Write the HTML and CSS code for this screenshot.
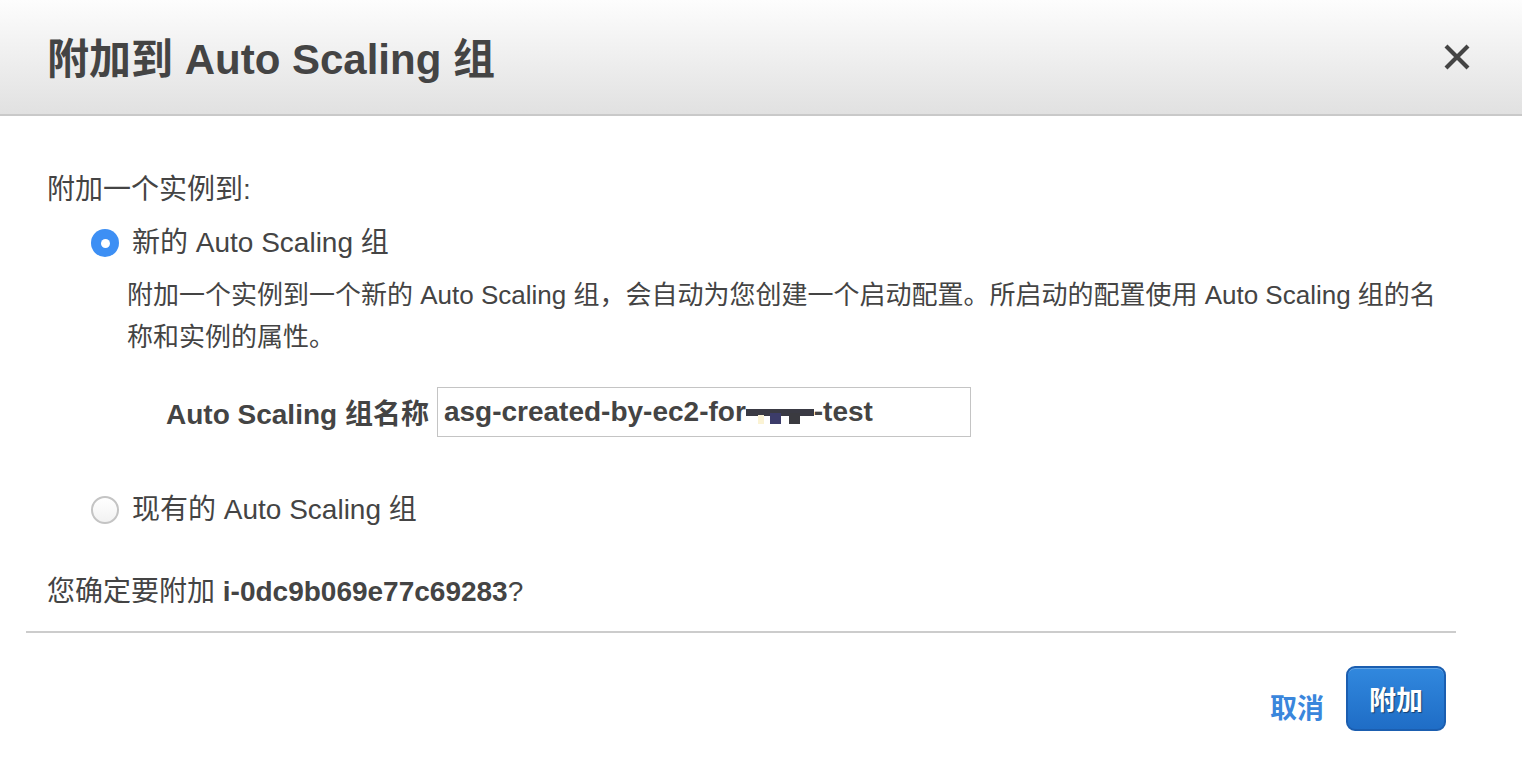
FILE: index.html
```html
<!DOCTYPE html>
<html lang="zh-CN">
<head>
<meta charset="utf-8">
<title>附加到 Auto Scaling 组</title>
<link rel="stylesheet" href="styles.css">
</head>
<body>
<div class="dialog">
  <header class="hd">
    <h1 class="title">附加到 Auto Scaling 组</h1>
    <button class="close" type="button" aria-label="关闭">
      <svg width="28" height="28" viewBox="0 0 28 28"><path d="M3 3 L25 25 M25 3 L3 25" stroke="#444" stroke-width="4.2" stroke-linecap="butt" fill="none"/></svg>
    </button>
  </header>
  <main class="bd">
    <p class="lead">附加一个实例到:</p>
    <div class="options">
      <div class="radio-row">
        <span class="radio checked"></span>
        <span class="radio-label">新的 Auto Scaling 组</span>
      </div>
      <p class="desc">附加一个实例到一个新的 Auto Scaling 组，会自动为您创建一个启动配置。所启动的配置使用 Auto Scaling 组的名称和实例的属性。</p>
      <div class="field">
        <span class="field-label">Auto Scaling 组名称</span>
        <div class="input"><span>asg-created-by-ec2-for</span><span class="redact"><i class="bar"></i><i class="leg l1"></i><i class="leg l2"></i><i class="spot"></i></span><span>-test</span></div>
      </div>
      <div class="radio-row second">
        <span class="radio"></span>
        <span class="radio-label">现有的 Auto Scaling 组</span>
      </div>
    </div>
    <p class="confirm">您确定要附加 <b>i-0dc9b069e77c69283</b>?</p>
  </main>
  <div class="sep"></div>
  <footer class="actions">
    <a class="cancel" href="#">取消</a>
    <button class="primary" type="button">附加</button>
  </footer>
</div>
</body>
</html>
```
FILE: styles.css
```css
* { box-sizing: border-box; }
html, body { margin: 0; padding: 0; background: #fff; }
body {
  font-family: "Liberation Sans", "Noto Sans CJK SC", sans-serif;
  color: #444;
  width: 1522px;
  height: 770px;
  overflow: hidden;
}
.dialog { display: flex; flex-direction: column; }
.hd {
  height: 116px;
  border-bottom: 2px solid #c9c9c9;
  background: linear-gradient(to bottom, #fdfdfd 0%, #e1e1e1 100%);
  display: flex;
  align-items: center;
  justify-content: space-between;
  padding: 0 51px 0 47px;
}
.title {
  margin: 0;
  font-size: 42px;
  font-weight: bold;
  color: #444;
  line-height: 50px;
  position: relative;
  top: 3px;
}
.close {
  border: 0;
  background: transparent;
  padding: 0;
  width: 28px;
  height: 28px;
  display: flex;
  cursor: pointer;
}
.bd { padding: 54px 0 0 47px; }
.lead { margin: 0; font-size: 28px; line-height: 40px; }
.options { padding-left: 44px; }
.radio-row {
  display: flex;
  align-items: center;
  gap: 13px;
  margin-top: 13px;
  height: 40px;
}
.radio-row.second { margin-top: 53px; }
.radio {
  width: 28px;
  height: 28px;
  border-radius: 50%;
  border: 2px solid #c4c4c4;
  background: linear-gradient(to bottom, #ffffff, #f2f2f2);
  flex: none;
  display: flex;
  align-items: center;
  justify-content: center;
}
.radio.checked {
  border: none;
  background: #3d8ff4;
}
.radio.checked::after {
  content: "";
  width: 9px;
  height: 9px;
  border-radius: 50%;
  background: #fff;
}
.radio-label { font-size: 28px; line-height: 40px; }
.desc {
  margin: 11px 0 0 36px;
  width: 1320px;
  font-size: 26px;
  line-height: 42px;
}
.field {
  display: flex;
  align-items: center;
  gap: 8px;
  margin-top: 29px;
  padding-left: 75px;
}
.field-label { font-size: 28px; font-weight: bold; }
.input {
  width: 534px;
  height: 50px;
  border: 1px solid #c4c4c4;
  display: flex;
  align-items: center;
  padding-left: 6px;
  font-size: 28px;
  font-weight: bold;
  color: #444;
}
.redact {
  position: relative;
  display: inline-block;
  width: 68px;
  height: 28px;
}
.redact i { position: absolute; display: block; filter: blur(0.6px); }
.redact .bar { left: 0; right: 0; top: 11px; height: 7px; background: #3a3a44; }
.redact .leg { top: 15px; width: 11px; height: 11px; background: #3a3a40; }
.redact .l1 { left: 24px; background: #3c3c6a; }
.redact .l2 { left: 43px; }
.redact .spot { left: 12px; top: 17px; width: 6px; height: 9px; background: #fbf3d4; }
.confirm { margin: 42px 0 0; font-size: 28px; line-height: 40px; }
.confirm b { font-weight: bold; }
.sep {
  height: 2px;
  background: #cccccc;
  margin: 19px 66px 0 26px;
}
.actions {
  display: flex;
  justify-content: flex-end;
  align-items: center;
  gap: 22px;
  padding: 33px 76px 0 0;
}
.cancel {
  font-size: 27px;
  font-weight: bold;
  color: #3a86dc;
  text-decoration: none;
  position: relative;
  top: 8px;
}
.primary {
  width: 100px;
  height: 65px;
  border: 2px solid #1b5eb0;
  border-radius: 9px;
  background: linear-gradient(to bottom, #3188de 0%, #1f6dc6 100%);
  color: #fff;
  font-family: "Liberation Sans", "Noto Sans CJK SC", sans-serif;
  font-size: 27px;
  font-weight: bold;
  text-shadow: 1px 1px 1px rgba(0, 0, 0, 0.45);
  box-shadow: inset 0 1px 0 rgba(255, 255, 255, 0.25);
  padding: 0;
  cursor: pointer;
}
```
